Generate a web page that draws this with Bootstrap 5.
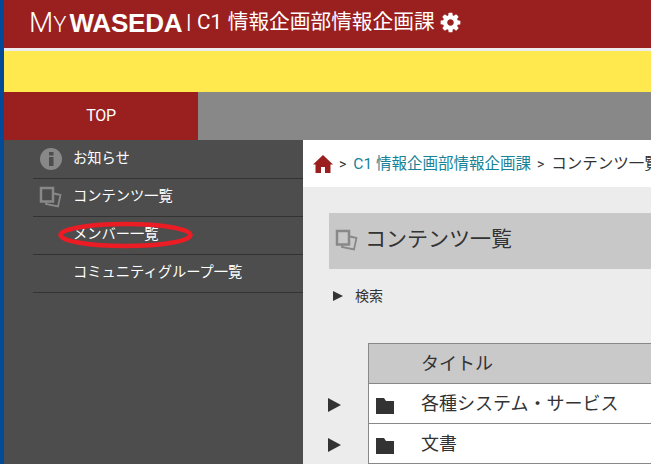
<!DOCTYPE html>
<html lang="ja">
<head>
<meta charset="utf-8">
<title>MyWaseda</title>
<link href="https://cdn.jsdelivr.net/npm/bootstrap@5.3.0/dist/css/bootstrap.min.css" rel="stylesheet">
<style>
html,body{height:464px;overflow:hidden;}
body{font-family:Roboto,"Noto Sans CJK JP",sans-serif;background:#ececec;color:#333;}
.shell{border-left:4px solid #004a98;height:464px;width:651px;overflow:hidden;}
.top-band{height:48px;background:#9a2020;color:#fff;padding:0 0 3px 25px;}
.top-band svg,.crumb svg,.title-bar svg{flex:none;}
.logo-my{font-family:Roboto,sans-serif;font-size:28px;font-weight:300;line-height:1;}
.logo-my span{font-size:22px;}
.logo-wa{font-family:"Liberation Sans",sans-serif;font-size:26px;font-weight:700;line-height:1;margin-left:3px;letter-spacing:-.2px;}
.site-name{font-size:20.7px;margin-left:4px;white-space:nowrap;word-spacing:.5px;}
.gap-band{height:3px;background:#ececec;}
.notice-band{height:41px;background:#ffe94f;}
.tab-band{height:48px;background:#888;}
.tab-top{width:194px;background:#9a2020;color:#fff;font-size:16px;letter-spacing:-.3px;}
.main-row{height:324px;}
.side{width:299px;flex:none;background:#4d4d4d;padding:1px 0 0 29px;}
.side-item{height:38px;border-bottom:1px solid #333;color:#fff;font-size:14.25px;padding:0 0 1px 40px;position:relative;}
.side-ico{position:absolute;left:6px;top:7px;}
.ring{position:absolute;left:24.500px;top:4px;}
.work{flex:1 1 auto;min-width:0;background:#ececec;}
.crumb{height:47px;background:#fff;font-size:15.5px;padding:2px 0 0 10px;white-space:nowrap;overflow:hidden;}
.crumb a{color:#168398;text-decoration:none;}
.crumb .sep{font-size:14px;margin:0 7px 0 6px;}
.title-bar{height:56px;background:#c8c8c8;margin:26px 0 0 26px;padding:0 0 2px 6px;font-size:21px;white-space:nowrap;}
.title-bar svg{margin-right:7px;}
.search-line{margin:18px 0 0 30px;font-size:14px;height:18px;}
.tri{width:0;height:0;border-left:10px solid #333;border-top:5.500px solid transparent;border-bottom:5.500px solid transparent;margin-right:12px;}
.tree{margin:38px 0 0 25px;}
.row-head{margin-left:40px;height:41px;background:#c9c9c9;border:solid #888;border-width:1px 0 1px 1px;font-size:18px;padding-left:52px;}
.row-wrap{height:40px;}
.row-tri{width:40px;flex:none;padding-top:2px;}
.tri-big{border-left-width:13px;border-top-width:7px;border-bottom-width:7px;margin-right:0;}
.row-body{flex:1;background:#fff;border:solid #888;border-width:0 0 1px 1px;font-size:18px;padding-left:7px;height:40px;white-space:nowrap;}
.row-body svg{margin-right:27px;margin-top:4px;}
</style>
</head>
<body>
<div class="shell">
  <div class="top-band d-flex align-items-center">
    <span class="logo-my">M<span>Y</span></span><span class="logo-wa">WASEDA</span>
    <span class="site-name">| C1 情報企画部情報企画課</span>
    <svg class="ms-1" width="23" height="23" viewBox="0 0 1792 1792" fill="#fff"><path d="M1152 896q0-106-75-181t-181-75-181 75-75 181 75 181 181 75 181-75 75-181zm512-109v222q0 12-8 23t-20 13l-185 28q-19 54-39 91 35 50 107 138 10 12 10 25t-9 23q-27 37-99 108t-94 71q-12 0-26-9l-138-108q-44 23-91 38-16 136-29 186-7 28-36 28h-222q-14 0-24.500-8.500t-11.500-21.500l-28-184q-49-16-90-37l-141 107q-10 9-25 9-14 0-25-11-126-114-165-168-7-10-7-23 0-12 8-23 15-21 51-66.500t54-70.500q-27-50-41-99l-183-27q-13-2-21-12.500t-8-23.500v-222q0-12 8-23t19-13l186-28q14-46 39-92-40-57-107-138-10-12-10-24 0-10 9-23 26-36 98.500-107.500t94.500-71.500q13 0 26 10l138 107q44-23 91-38 16-136 29-186 7-28 36-28h222q14 0 24.500 8.500t11.500 21.500l28 184q49 16 90 37l142-107q9-9 24-9 13 0 25 10 129 119 165 170 7 8 7 22 0 12-8 23-15 21-51 66.500t-54 70.500q26 50 41 98l183 28q13 2 21 12.500t8 23.500z"/></svg>
  </div>
  <div class="gap-band"></div>
  <div class="notice-band"></div>
  <div class="tab-band d-flex">
    <div class="tab-top d-flex align-items-center justify-content-center">TOP</div>
  </div>
  <div class="main-row d-flex">
    <nav class="side">
      <div class="side-item d-flex align-items-center">
        <svg class="side-ico" width="23" height="22" viewBox="0 0 23 22"><circle cx="12" cy="11" r="11" fill="#888"/><rect x="10" y="9" width="4.500" height="9" fill="#4d4d4d"/><rect x="10" y="4" width="4.500" height="3.500" fill="#4d4d4d"/></svg>
        お知らせ
      </div>
      <div class="side-item d-flex align-items-center">
        <svg class="side-ico" width="23" height="22" viewBox="0 0 23 22" fill="none" stroke="#888" stroke-width="2.500"><path d="M9 15.500 2 15.500 2 2 14 2 14 15.500 9 15.500"/><path d="M15 7.500 21.500 9 19 20.500 7 18 7.500 16" stroke-width="1.800"/></svg>
        コンテンツ一覧
      </div>
      <div class="side-item d-flex align-items-center">
        メンバー一覧
        <svg class="ring" width="135" height="28" viewBox="0 0 135 28" fill="none"><ellipse cx="67.500" cy="14" rx="65" ry="11" stroke="#ec1c24" stroke-width="4.500"/></svg>
      </div>
      <div class="side-item d-flex align-items-center">コミュニティグループ一覧</div>
    </nav>
    <main class="work">
      <div class="crumb d-flex align-items-center">
        <svg width="20" height="19" viewBox="0 0 20 19" fill="#9a2020"><path d="M10 0 20 9.500 17.500 9.500 17.500 18 12 18 12 12 8 12 8 18 2.500 18 2.500 9.500 0 9.500z"/></svg>
        <span class="sep">&gt;</span><a href="#">C1 情報企画部情報企画課</a><span class="sep">&gt;</span><span>コンテンツ一覧</span>
      </div>
      <div class="title-bar d-flex align-items-center">
        <svg width="23" height="22" viewBox="0 0 23 22" fill="none" stroke="#888" stroke-width="2.500"><path d="M9 15.500 2 15.500 2 2 14 2 14 15.500 9 15.500"/><path d="M15 7.500 21.500 9 19 20.500 7 18 7.500 16" stroke-width="1.800"/></svg>
        コンテンツ一覧
      </div>
      <div class="search-line d-flex align-items-center"><span class="tri"></span>検索</div>
      <div class="tree">
        <div class="row-head d-flex align-items-center">タイトル</div>
        <div class="row-wrap d-flex">
          <div class="row-tri d-flex align-items-center"><span class="tri tri-big"></span></div>
          <div class="row-body d-flex align-items-center"><svg width="18" height="16" viewBox="0 0 18 16" fill="#333"><path d="M0 0H8L10 3H18V16H0z"/></svg>各種システム・サービス</div>
        </div>
        <div class="row-wrap d-flex">
          <div class="row-tri d-flex align-items-center"><span class="tri tri-big"></span></div>
          <div class="row-body d-flex align-items-center"><svg width="18" height="16" viewBox="0 0 18 16" fill="#333"><path d="M0 0H8L10 3H18V16H0z"/></svg>文書</div>
        </div>
      </div>
    </main>
  </div>
</div>
</body>
</html>
